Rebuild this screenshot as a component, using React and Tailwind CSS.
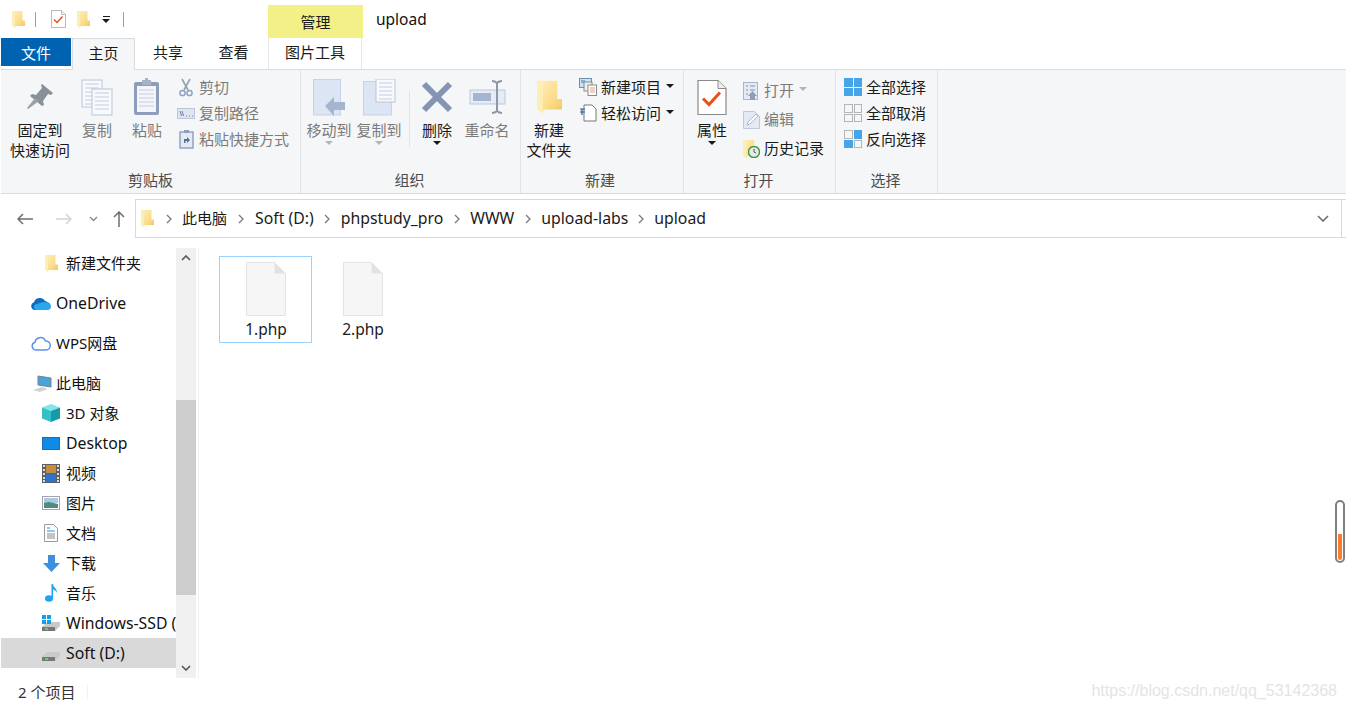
import React from "react";

const FONT = "font-['Noto_Sans','Noto_Sans_CJK_SC',sans-serif]";

const Folder = ({ className = "w-[13px] h-[17px]" }) => (
  <svg viewBox="0 0 13 17" className={className}>
    <defs>
      <linearGradient id="fold" x1="0" y1="0" x2="1" y2="1">
        <stop offset="0" stopColor="#fff0bd" />
        <stop offset="0.6" stopColor="#fbdc8a" />
        <stop offset="1" stopColor="#f3c55c" />
      </linearGradient>
    </defs>
    <path d="M0 0h10.500v9.500H13V15H3.500L3 17l-3-2.500z" fill="url(#fold)" />
    <path d="M0 0h3v17l-3-2.500z" fill="#ffeeb4" />
  </svg>
);

const CheckDoc = ({ className }) => (
  <svg viewBox="0 0 30 36" className={className}>
    <path d="M1 1h20l8 8v26H1z" fill="#fff" stroke="#8a8a8a" strokeWidth="1.2" />
    <path d="M21 1v8h8" fill="#eee" stroke="#8a8a8a" strokeWidth="1" />
    <path d="M6 19l6 6 11-12" fill="none" stroke="#e8501c" strokeWidth="3" />
  </svg>
);

const Pin = () => (
  <svg viewBox="0 0 28 28" className="w-[28px] h-[28px]">
    <path d="M16 1l11 9-2 2-3-1-5 7 1 4-2 1-12-10 2-2 4 1 6-7-1-3z" fill="#8a9099" />
    <path d="M9 15l4 3-11 8-1-1z" fill="#9aa0a8" />
  </svg>
);

const PageLines = ({ x, y, w, h }) => (
  <g>
    <rect x={x} y={y} width={w} height={h} fill="#f7f9fc" stroke="#bcc6d8" />
    {[4, 8, 12, 16, 20, 24, 28].filter((d) => d < h - 2).map((d) => (
      <path key={d} d={`M${x + 3} ${y + d}h${w - 6}`} stroke="#c3cee0" />
    ))}
  </g>
);

const CopyIcon = () => (
  <svg viewBox="0 0 32 37" className="w-[32px] h-[37px]">
    <PageLines x={1} y={1} w={20} h={27} />
    <PageLines x={11} y={10} w={20} h={26} />
  </svg>
);

const PasteIcon = () => (
  <svg viewBox="0 0 28 38" className="w-[28px] h-[38px]">
    <rect x="1" y="4" width="25" height="33" rx="2" fill="#8d9dba" />
    <rect x="4" y="8" width="19" height="26" fill="#f3f5fa" />
    {[12, 16, 20, 24, 28].map((d) => (
      <path key={d} d={`M6 ${d}h15`} stroke="#c3cee0" />
    ))}
    <rect x="9" y="2" width="9" height="5" fill="#a5b2c9" />
    <rect x="12" y="0" width="3" height="3" fill="#a5b2c9" />
  </svg>
);

const Scissors = () => (
  <svg viewBox="0 0 14 19" className="w-[14px] h-[19px]">
    <path d="M3 1l6 11M11 1L5 12" stroke="#9a9fa8" strokeWidth="1.6" fill="none" />
    <circle cx="3.500" cy="15" r="2.600" fill="none" stroke="#8fa3c4" strokeWidth="1.500" />
    <circle cx="10.500" cy="15" r="2.600" fill="none" stroke="#8fa3c4" strokeWidth="1.500" />
  </svg>
);

const PathIcon = () => (
  <svg viewBox="0 0 18 11" className="w-[18px] h-[11px]">
    <rect x="0.500" y="0.500" width="17" height="10" fill="#dfe6f2" stroke="#bcc6d8" />
    <path d="M3 3l1.500 5M5 3l1.500 5" stroke="#6f7f9c" />
    <path d="M9 8h1M12 8h1M15 8h1" stroke="#6f7f9c" />
  </svg>
);

const ShortcutIcon = () => (
  <svg viewBox="0 0 15 19" className="w-[15px] h-[19px]">
    <rect x="1" y="2" width="13" height="16" fill="#e4eaf4" stroke="#8d9dba" strokeWidth="1.400" />
    <rect x="5" y="0" width="5" height="3" fill="#8d9dba" />
    <path d="M5 13V9h3V7l3 3-3 3v-2H6.500v2z" fill="#5d6f90" />
  </svg>
);

const MoveIcon = () => (
  <svg viewBox="0 0 33 37" className="w-[33px] h-[37px]">
    <rect x="0.500" y="0.500" width="27" height="35.500" fill="#dce5f3" stroke="#c7d2e6" />
    <path d="M12 27l9-9v5h11v8H21v6z" fill="#a6b5cf" />
  </svg>
);

const CopyToIcon = () => (
  <svg viewBox="0 0 33 37" className="w-[33px] h-[37px]">
    <rect x="0.500" y="2.500" width="28" height="33.500" fill="#dce5f3" stroke="#c7d2e6" />
    <PageLines x={13} y={0} w={19} h={23} />
  </svg>
);

const DeleteIcon = () => (
  <svg viewBox="0 0 32 32" className="w-[32px] h-[32px]">
    <path d="M3 3l26 26M29 3L3 29" stroke="#8494b2" strokeWidth="6" />
  </svg>
);

const RenameIcon = () => (
  <svg viewBox="0 0 37 34" className="w-[37px] h-[34px]">
    <rect x="1" y="10" width="35" height="14" fill="#e6ecf6" stroke="#bcc8dc" />
    <rect x="4" y="13" width="18" height="8" fill="#a6b5cf" />
    <path d="M23 1c3 0 4 1 5 2 1-1 2-2 5-2M28 3v28M23 33c3 0 4-1 5-2 1 1 2 2 5 2" stroke="#8f97a6" strokeWidth="2" fill="none" />
  </svg>
);

const SmallNewItem = () => (
  <svg viewBox="0 0 18 18" className="w-[18px] h-[18px]">
    <rect x="0.500" y="0.500" width="12" height="9" fill="#cfe0f2" stroke="#6f8fb0" />
    <rect x="2" y="2" width="4" height="3" fill="#7fb0d8" />
    <rect x="5" y="4" width="8" height="9" fill="#eee" stroke="#8a8a8a" />
    <rect x="9" y="7" width="8.500" height="10.500" fill="#fff" stroke="#8a8a8a" />
    <path d="M11 10h5M11 12h5M11 14h5" stroke="#e2a08a" />
  </svg>
);

const EasyAccess = () => (
  <svg viewBox="0 0 17 18" className="w-[17px] h-[18px]">
    <path d="M4 1h8l4 4v12H4z" fill="#fff" stroke="#777" />
    <path d="M0 5h5M0 8h5M2 5v6" stroke="#2a5d9c" strokeWidth="1.200" />
  </svg>
);

const OpenIcon = () => (
  <svg viewBox="0 0 17 18" className="w-[17px] h-[18px]">
    <rect x="0.500" y="0.500" width="14" height="17" fill="#e4eaf4" stroke="#a8b6cd" />
    <path d="M3 4h2M7 4h5M3 8h2M7 8h5M3 12h2" stroke="#7f90ad" />
    <path d="M7 18v-4H5l4.500-5 4.500 5h-2v4z" fill="#8d9dba" />
  </svg>
);

const EditIcon = () => (
  <svg viewBox="0 0 17 18" className="w-[17px] h-[18px]">
    <path d="M0.500 0.500h11l5 5v12H0.500z" fill="#e4eaf4" stroke="#bcc8dc" />
    <path d="M4 14l1-3 8-8 2 2-8 8z" fill="#fff" stroke="#a8b6cd" />
  </svg>
);

const HistoryIcon = () => (
  <div className="relative w-[17px] h-[18px]">
    <Folder className="w-[14px] h-[18px]" />
    <svg viewBox="0 0 12 12" className="absolute left-[5px] top-[6px] w-[12px] h-[12px]">
      <circle cx="6" cy="6" r="5.500" fill="#e8e8e8" stroke="#3a9a3a" strokeWidth="1.400" />
      <path d="M6 3v3l2 1" stroke="#555" fill="none" />
    </svg>
  </div>
);

const SelectGrid = ({ cells }) => (
  <div className="grid grid-cols-2 gap-[1px] w-[18px] h-[18px]">
    {cells.map((on, i) => (
      <div key={i} className={on ? "bg-[#45a5e8]" : "border border-[#b5b5b5]"} />
    ))}
  </div>
);

const Caret = ({ className = "border-t-[#1a1a1a]" }) => (
  <span className={`inline-block w-0 h-0 border-l-[4px] border-r-[4px] border-t-[4px] border-l-transparent border-r-transparent ${className}`} />
);

const Big = ({ icon, lines, w, gray, caret }) => (
  <div className={`flex flex-col items-center shrink-0 ${w}`}>
    <div className="h-[44px] flex items-center justify-center">{icon}</div>
    <div className={`mt-[1px] text-center leading-[20px] whitespace-nowrap ${gray ? "text-[#7b7b7b]" : "text-[#1a1a1a]"}`}>
      {lines.map((l) => (
        <div key={l}>{l}</div>
      ))}
    </div>
    {caret && (
      <div className="leading-none -mt-[8px]">
        <Caret className={gray ? "border-t-[#b5b5b5]" : "border-t-[#1a1a1a]"} />
      </div>
    )}
  </div>
);

const Small = ({ icon, label, gray, caret, h = "h-[26px]" }) => (
  <div className={`flex items-center whitespace-nowrap ${h}`}>
    <div className="w-[18px] mr-[4px] flex items-center justify-center shrink-0">{icon}</div>
    <span className={gray ? "text-[#7b7b7b]" : "text-[#1a1a1a]"}>{label}</span>
    {caret && (
      <span className="ml-[5px] mb-[3px] flex">
        <Caret className={gray ? "border-t-[#b5b5b5]" : "border-t-[#1a1a1a]"} />
      </span>
    )}
  </div>
);

const Group = ({ w, label, labelPad = "pr-[2px]", children }) => (
  <div className={`${w} shrink-0 h-full flex flex-col border-r border-[#e1e3e6]`}>
    <div className="flex-1 flex pt-[5px]">{children}</div>
    <div className={`h-[24px] text-center leading-[22px] text-[#4c4c4c] ${labelPad}`}>{label}</div>
  </div>
);

const Ribbon = () => (
  <div className="h-[124px] ml-[1px] bg-[#f5f6f7] border-b border-[#dadbdc] flex">
    <Group w="w-[300px]" label="剪贴板" labelPad="pr-0">
      <Big w="w-[60px] ml-[9px]" icon={<Pin />} lines={["固定到", "快速访问"]} />
      <Big w="w-[40px] ml-[7px]" icon={<CopyIcon />} lines={["复制"]} gray />
      <Big w="w-[40px] ml-[10px]" icon={<PasteIcon />} lines={["粘贴"]} gray />
      <div className="ml-[10px] -mt-[1px]">
        <Small gray icon={<Scissors />} label="剪切" />
        <Small gray icon={<PathIcon />} label="复制路径" />
        <Small gray icon={<ShortcutIcon />} label="粘贴快捷方式" />
      </div>
    </Group>
    <Group w="w-[220px]" label="组织">
      <Big gray caret w="w-[50px] ml-[3px]" icon={<MoveIcon />} lines={["移动到"]} />
      <Big gray caret w="w-[50px]" icon={<CopyToIcon />} lines={["复制到"]} />
      <div className="w-px h-[56px] mt-[16px] ml-[5px] bg-[#e1e3e6]" />
      <Big caret w="w-[50px] ml-[2px]" icon={<DeleteIcon />} lines={["删除"]} />
      <Big gray w="w-[50px]" icon={<RenameIcon />} lines={["重命名"]} />
    </Group>
    <Group w="w-[163px]" label="新建" labelPad="pr-[4px]">
      <Big w="w-[50px] ml-[3px]" icon={<Folder className="w-[25px] h-[36px]" />} lines={["新建", "文件夹"]} />
      <div className="ml-[5px] -mt-[1px]">
        <Small caret icon={<SmallNewItem />} label="新建项目" />
        <Small caret icon={<EasyAccess />} label="轻松访问" />
      </div>
    </Group>
    <Group w="w-[152px]" label="打开">
      <Big caret w="w-[50px] ml-[3px]" icon={<CheckDoc className="w-[30px] h-[37px]" />} lines={["属性"]} />
      <div className="ml-[5px] pt-[1px]">
        <Small gray caret h="h-[29px]" icon={<OpenIcon />} label="打开" />
        <Small gray h="h-[29px]" icon={<EditIcon />} label="编辑" />
        <Small h="h-[29px]" icon={<HistoryIcon />} label="历史记录" />
      </div>
    </Group>
    <Group w="w-[102px]" label="选择">
      <div className="ml-[8px] -mt-[1px]">
        <Small icon={<SelectGrid cells={[1, 1, 1, 1]} />} label="全部选择" />
        <Small icon={<SelectGrid cells={[0, 0, 0, 0]} />} label="全部取消" />
        <Small icon={<SelectGrid cells={[0, 1, 1, 0]} />} label="反向选择" />
      </div>
    </Group>
  </div>
);

const Chevron = ({ className = "mx-[10px]" }) => (
  <svg viewBox="0 0 6 10" className={`w-[6px] h-[10px] shrink-0 ${className}`}>
    <path d="M1 1l4 4-4 4" fill="none" stroke="#7a7a7a" strokeWidth="1.300" />
  </svg>
);

const AddressBar = () => (
  <div className="h-[49px] flex items-center">
    <div className="w-[135px] shrink-0 flex items-center">
      <svg viewBox="0 0 16 12" className="w-[16px] h-[12px] ml-[17px]">
        <path d="M6 1L1 6l5 5M1 6h15" fill="none" stroke="#6d6d6d" strokeWidth="1.500" />
      </svg>
      <svg viewBox="0 0 16 12" className="w-[16px] h-[12px] ml-[23px]">
        <path d="M10 1l5 5-5 5M15 6H0" fill="none" stroke="#d4d4d4" strokeWidth="1.500" />
      </svg>
      <svg viewBox="0 0 9 6" className="w-[9px] h-[6px] ml-[17px]">
        <path d="M1 1l3.500 3.500L8 1" fill="none" stroke="#8a8a8a" strokeWidth="1.400" />
      </svg>
      <svg viewBox="0 0 12 16" className="w-[12px] h-[16px] ml-[15px]">
        <path d="M1 6l5-5 5 5M6 1v15" fill="none" stroke="#6d6d6d" strokeWidth="1.500" />
      </svg>
    </div>
    <div className="flex-1 h-[39px] border-y border-l border-[#d9d9d9] flex items-center text-[#1a1a1a]">
      <div className="flex items-center pl-[5px] whitespace-nowrap">
        <Folder className="w-[13px] h-[17px]" />
        <Chevron className="ml-[12px] mr-[10px]" />
        <span>此电脑</span>
        <Chevron className="mx-[11px]" />
        <span className="text-[15.8px]">Soft (D:)</span>
        <Chevron className="mx-[10.500px]" />
        <span className="text-[15.8px]">phpstudy_pro</span>
        <Chevron className="mx-[10.500px]" />
        <span className="text-[15.8px]">WWW</span>
        <Chevron className="mx-[10.500px]" />
        <span className="text-[15.8px]">upload-labs</span>
        <Chevron className="mx-[10px]" />
        <span className="text-[15.8px]">upload</span>
      </div>
      <svg viewBox="0 0 12 7" className="w-[12px] h-[7px] ml-auto mr-[12px]">
        <path d="M1 1l5 5 5-5" fill="none" stroke="#6d6d6d" strokeWidth="1.600" />
      </svg>
    </div>
    <div className="w-[5px] h-[39px] border-y border-l border-[#d9d9d9] shrink-0" />
  </div>
);

const OneDrive = () => (
  <svg viewBox="0 0 20 13" className="w-[20px] h-[13px]">
    <path d="M4 13a4 4 0 0 1-1-7.800A6 6 0 0 1 14 4a4 4 0 0 1 3 1.500L9 13z" fill="#0f6cbd" />
    <path d="M6 13a3 3 0 0 1 0-6l3-1 3-1 3 .500a3.500 3.500 0 0 1 2 7.500z" fill="#28a8ea" />
  </svg>
);

const WpsCloud = () => (
  <svg viewBox="0 0 20 15" className="w-[20px] h-[15px]">
    <path d="M5 14a4 4 0 0 1-1-7.800A5.500 5.500 0 0 1 14.500 5 4.500 4.500 0 0 1 15 14z" fill="#fff" stroke="#5b8ff0" strokeWidth="1.500" />
  </svg>
);

const PcIcon = () => (
  <svg viewBox="0 0 20 17" className="w-[20px] h-[17px]">
    <path d="M6 1l13 2v9L6 10z" fill="#4aa3d8" stroke="#6f8797" />
    <path d="M1 15l9-3 6 2-8 3z" fill="#cfd4d8" />
  </svg>
);

const Cube = () => (
  <svg viewBox="0 0 18 18" className="w-[18px] h-[18px]">
    <path d="M9 0l9 3.500L9 7 0 3.500z" fill="#7fe6ea" />
    <path d="M0 3.500L9 7v11l-9-3.500z" fill="#35bfc9" />
    <path d="M18 3.500L9 7v11l9-3.500z" fill="#169aa8" />
  </svg>
);

const DesktopIcon = () => (
  <div className="w-[18px] h-[13px] shrink-0 bg-[#0f8ae6] border border-[#1c6fb3]" />
);

const VideoIcon = () => (
  <svg viewBox="0 0 18 19" className="w-[18px] h-[19px]">
    <rect width="18" height="19" fill="#5f5f5f" />
    <rect x="4" y="1" width="10" height="8" fill="#c98c3a" />
    <rect x="4" y="10" width="10" height="8" fill="#2f72d0" />
    {[1, 5, 9, 13, 16].map((y) => (
      <g key={y}>
        <rect x="1" y={y} width="2" height="2" fill="#ddd" />
        <rect x="15" y={y} width="2" height="2" fill="#ddd" />
      </g>
    ))}
  </svg>
);

const PictureIcon = () => (
  <svg viewBox="0 0 18 14" className="w-[18px] h-[14px]">
    <rect x="0.500" y="0.500" width="17" height="13" fill="#fff" stroke="#a3a3a3" />
    <rect x="2" y="2" width="14" height="5" fill="#a8c8e8" />
    <path d="M2 7l5-1 9 2v4H2z" fill="#4f8a7a" />
  </svg>
);

const DocIcon = () => (
  <svg viewBox="0 0 14 18" className="w-[14px] h-[18px]">
    <path d="M0.500 0.500h9l4 4v13h-13z" fill="#fff" stroke="#9a9a9a" />
    <path d="M3 4h3M3 7h8" stroke="#2b8fd8" />
    <path d="M3 10h8M3 12h8M3 14h8" stroke="#8a8a8a" />
  </svg>
);

const DownloadIcon = () => (
  <svg viewBox="0 0 17 17" className="w-[17px] h-[17px]">
    <path d="M5 0h7v8h5l-8.500 9L0 8h5z" fill="#3f8fe0" />
  </svg>
);

const MusicIcon = () => (
  <svg viewBox="0 0 12 18" className="w-[12px] h-[18px]">
    <ellipse cx="4" cy="14.500" rx="4" ry="3.300" fill="#1fa5f0" />
    <path d="M6.500 0h1.500c.5 4 4 4 4 9-1-2-2-3-4-3.500V15H6.500z" fill="#1fa5f0" />
  </svg>
);

const Drive = ({ win }) => (
  <div className="relative w-[18px] h-[16px] shrink-0">
    <svg viewBox="0 0 18 9" className="absolute left-0 bottom-0 w-[18px] h-[9px]">
      <path d="M0 5l5-5h13v4l-5 5H0z" fill="#c9c9c9" />
      <rect x="0" y="5" width="13" height="4" fill="#777" />
      <rect x="3" y="6" width="3" height="2" fill="#5fd35f" />
    </svg>
    {win && (
      <div className="absolute left-0 top-0 grid grid-cols-2 gap-px w-[9px] h-[9px]">
        <div className="bg-[#14a0e8]" />
        <div className="bg-[#14a0e8]" />
        <div className="bg-[#14a0e8]" />
        <div className="bg-[#14a0e8]" />
      </div>
    )}
  </div>
);

const NavRow = ({ icon, label, latin, indent = "pl-[41px]", selected, iconBox = "w-[18px] mr-[6px]" }) => (
  <div className={`h-[30px] flex items-center whitespace-nowrap overflow-hidden ${indent} ${selected ? "bg-[#d9d9d9]" : ""}`}>
    <div className={`${iconBox} shrink-0 flex items-center justify-center`}>{icon}</div>
    <span className={`text-[#111] ${latin ? "text-[15.8px] pt-[2px]" : ""}`}>{label}</span>
  </div>
);

const Sidebar = () => (
  <div className="w-[175px] shrink-0 pt-[5px] ml-[1px] overflow-hidden">
    <NavRow icon={<Folder className="w-[13px] h-[17px]" />} label="新建文件夹" />
    <div className="h-[10px]" />
    <NavRow indent="pl-[30px]" iconBox="w-[20px] mr-[5px]" latin icon={<OneDrive />} label="OneDrive" />
    <div className="h-[10px]" />
    <NavRow indent="pl-[30px]" iconBox="w-[20px] mr-[5px]" icon={<WpsCloud />} label="WPS网盘" />
    <div className="h-[10px]" />
    <NavRow indent="pl-[31px]" iconBox="w-[20px] mr-[4px]" icon={<PcIcon />} label="此电脑" />
    <NavRow icon={<Cube />} label="3D 对象" />
    <NavRow latin icon={<DesktopIcon />} label="Desktop" />
    <NavRow icon={<VideoIcon />} label="视频" />
    <NavRow icon={<PictureIcon />} label="图片" />
    <NavRow icon={<DocIcon />} label="文档" />
    <NavRow icon={<DownloadIcon />} label="下载" />
    <NavRow icon={<MusicIcon />} label="音乐" />
    <NavRow latin icon={<Drive win />} label="Windows-SSD (" />
    <NavRow latin selected icon={<Drive />} label="Soft (D:)" />
  </div>
);

const Scrollbar = () => (
  <div className="w-[20px] shrink-0 mt-[5px] bg-[#f0f0f0] flex flex-col">
    <div className="h-[20px] flex items-center justify-center">
      <svg viewBox="0 0 10 6" className="w-[10px] h-[6px]">
        <path d="M1 5l4-4 4 4" fill="none" stroke="#555" strokeWidth="1.600" />
      </svg>
    </div>
    <div className="h-[132px]" />
    <div className="h-[195px] bg-[#cdcdcd]" />
    <div className="flex-1" />
    <div className="h-[20px] flex items-center justify-center">
      <svg viewBox="0 0 10 6" className="w-[10px] h-[6px]">
        <path d="M1 1l4 4 4-4" fill="none" stroke="#555" strokeWidth="1.600" />
      </svg>
    </div>
  </div>
);

const FileTile = ({ name, selected }) => (
  <div className={`w-[93px] h-[87px] flex flex-col items-center border ${selected ? "border-[#99d1ff]" : "border-transparent"}`}>
    <svg viewBox="0 0 40 54" className="w-[40px] h-[54px] mt-[5px] shrink-0">
      <path d="M0.500 0.500h28l11 11v42h-39z" fill="#f6f6f6" stroke="#e3e3e3" />
      <path d="M28.500 0.500v11h11z" fill="#e2e2e2" />
    </svg>
    <span className="leading-[20px] mt-[3px] pl-[1px] text-[15.5px] text-[#1a1a1a]">{name}</span>
  </div>
);

const App = () => (
  <div className={`relative w-[1346px] h-[708px] overflow-hidden bg-white text-[15px] ${FONT}`}>
    {/* title row */}
    <div className="h-[38px] flex">
      <div className="w-[268px] shrink-0 flex items-center">
        <Folder className="w-[13px] h-[17px] ml-[12px]" />
        <div className="w-px h-[15px] bg-[#a0a0a0] ml-[10px]" />
        <CheckDoc className="w-[15px] h-[18px] ml-[15px]" />
        <Folder className="w-[13px] h-[17px] ml-[11px]" />
        <div className="ml-[12px] flex flex-col items-center gap-[2px]">
          <div className="w-[7px] h-px bg-[#1a1a1a]" />
          <Caret />
        </div>
        <div className="w-px h-[15px] bg-[#a0a0a0] ml-[13px]" />
      </div>
      <div className="w-[95px] h-[33px] mt-[5px] pt-[2px] bg-[#f3f088] flex items-center justify-center text-[#1a1a1a]">管理</div>
      <div className="ml-[13px] pt-[8px] leading-[22px] text-[#111] text-[15.5px]">upload</div>
    </div>

    {/* tabs */}
    <div className="h-[31px] flex relative">
      <div className="w-[70px] h-[28px] ml-[1px] pt-[2px] bg-[#0063b1] text-white flex items-center justify-center">文件</div>
      <div className="w-[63px] ml-[1px] h-[32px] pb-[3px] bg-[#f5f6f7] border-x border-t border-[#dadbdc] flex items-center justify-center text-[#1a1a1a] z-10">主页</div>
      <div className="w-[66px] pb-[2px] flex items-center justify-center text-[#1a1a1a]">共享</div>
      <div className="w-[65px] pb-[2px] flex items-center justify-center text-[#1a1a1a]">查看</div>
      <div className="w-[94px] ml-[2px] pb-[2px] border-x border-[#e6e6e6] flex items-center justify-center text-[#1a1a1a]">图片工具</div>
    </div>

    <div className="h-px ml-[1px] bg-[#dadbdc]" />
    <Ribbon />
    <AddressBar />

    {/* body */}
    <div className="h-[435px] flex">
      <Sidebar />
      <Scrollbar />
      <div className="w-px ml-[2px] mt-[5px] bg-[#f0f0f0]" />
      <div className="flex-1 flex gap-[4px] pl-[20px] pt-[13px]">
        <FileTile selected name="1.php" />
        <FileTile name="2.php" />
      </div>
    </div>

    {/* status bar */}
    <div className="h-[30px] pb-[2px] flex items-center pl-[18px] text-[#333]">
      <span>2 个项目</span>
      <div className="w-px h-[14px] ml-[12px] bg-[#f0f0f0]" />
    </div>

    {/* page overlays */}
    <div className="absolute left-[1335px] top-[500px] w-[10px] h-[63px] rounded-full border-2 border-[#808080] bg-white flex items-end justify-center p-[1px]">
      <div className="w-[4px] h-[26px] bg-[#ff7a2a] rounded-b" />
    </div>
    <div className="absolute right-[9px] top-[681px] font-['Liberation_Sans',sans-serif] text-[16px] leading-[20px] text-[#e4e4e4]">
      https://blog.csdn.net/qq_53142368
    </div>
  </div>
);

export default App;
